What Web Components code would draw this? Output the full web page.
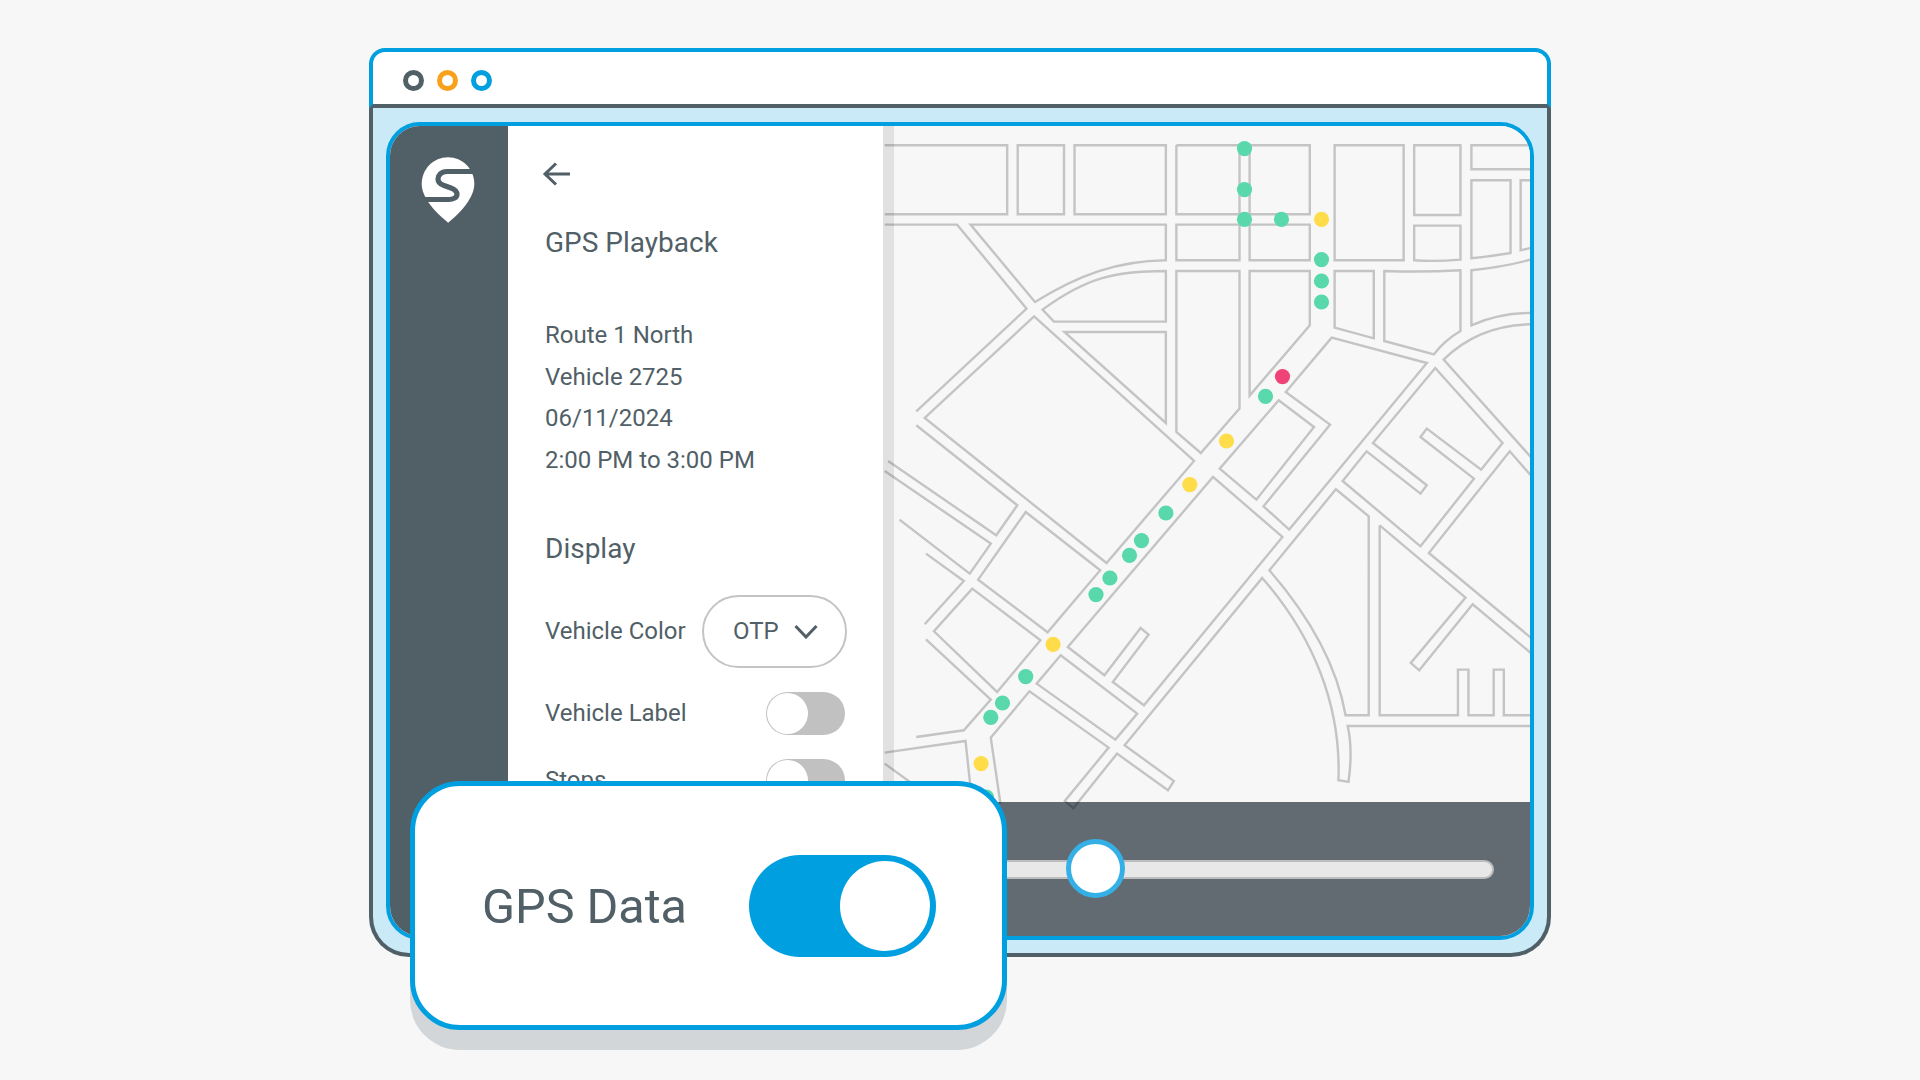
<!DOCTYPE html>
<html lang="en">
<head>
<meta charset="utf-8">
<title>GPS Playback</title>
<style>
  html, body { margin: 0; background: #f7f7f7; }
  body { height: 1080px; overflow: hidden; font-family: Roboto, "Liberation Sans", sans-serif; color: #515f67; }
  .stage { padding: 48px 0 0 369px; }
</style>
</head>
<body>
<div class="stage">
  <app-window>
    <side-rail></side-rail>
    <playback-panel></playback-panel>
    <map-view></map-view>
    <gps-card slot="overlay"></gps-card>
  </app-window>
</div>

<script>
class AppWindow extends HTMLElement {
  constructor() {
    super();
    this.attachShadow({mode: 'open'});
    this.shadowRoot.innerHTML = `
    <style>
      :host { display: block; position: relative; width: 1182px; height: 909px; }
      .frame { display: flex; flex-direction: column; height: 100%; }
      .bar {
        display: flex; align-items: center; gap: 13px; height: 60px; box-sizing: border-box;
        padding: 4px 0 0 30px; background: #fff;
        border: 4px solid #009fe0; border-bottom-color: #515f67; border-radius: 16px 16px 0 0;
      }
      .dot { width: 21px; height: 21px; box-sizing: border-box; border: 5px solid; border-radius: 50%; }
      .body {
        flex: 1; display: flex; min-height: 0; padding: 14px 13px 13px;
        background: #cbeaf8; border: 4px solid #515f67; border-top: 0; border-radius: 0 0 40px 40px;
      }
      .screen {
        flex: 1; display: flex; overflow: hidden; background: #fff;
        border: 4px solid #009fe0; border-radius: 34px;
      }
    </style>
    <div class="frame">
      <div class="bar">
        <span class="dot" style="border-color:#515f67"></span>
        <span class="dot" style="border-color:#f9a11b"></span>
        <span class="dot" style="border-color:#009fe0"></span>
      </div>
      <div class="body"><div class="screen"><slot></slot></div></div>
    </div>
    <slot name="overlay"></slot>
    `;
  }
}

class SideRail extends HTMLElement {
  constructor() {
    super();
    this.attachShadow({mode: 'open'});
    this.shadowRoot.innerHTML = `
    <style>
      :host { display: flex; justify-content: center; flex: 0 0 118px; padding: 30px 2px 0 0; background: #515f67; box-sizing: border-box; }
      svg { display: block; }
    </style>
    <svg width="55" height="67" viewBox="421 156 55 67">
      <path fill="#fff" d="M448 157.3C462.5 157.3 474.3 169 474.3 184C474.3 198 460 213 448.2 222.7C436 213 421.7 198 421.7 184C421.7 169 433.5 157.3 448 157.3Z"/>
      <path fill="none" stroke="#515f67" stroke-width="5.2" d="M477 171.5H447C441 171.5 438 175.5 438 179C438 183 441 184.5 444 185.5L451 188C455 189.5 457 192 457 194.5C457 197.5 453 199.5 449 199.5H418"/>
    </svg>
    `;
  }
}

class PlaybackPanel extends HTMLElement {
  constructor() {
    super();
    this.attachShadow({mode: 'open'});
    this.shadowRoot.innerHTML = `
    <style>
      :host { display: block; flex: 0 0 374.5px; box-sizing: border-box; padding: 36px 36px 0 37px; color: #515f67; font-family: Roboto, sans-serif; font-size: 24px; }
      svg { display: block; }
      h2 { margin: 0; font-size: 28px; line-height: 34px; font-weight: 400; }
      .back { height: 24px; margin-left: -3px; }
      .title { margin-top: 40px; }
      .info { margin-top: 55px; line-height: 41.6px; }
      .display { margin-top: 50.6px; }
      .row { display: flex; align-items: center; justify-content: space-between; margin-top: 24px; padding-right: 2px; }
      .first { margin-top: 29px; padding-right: 0; }
      .select {
        display: flex; align-items: center; gap: 15px; width: 144.5px; height: 73px; box-sizing: border-box;
        padding-left: 29px; border: 2.5px solid #c4c4c4; border-radius: 37px;
      }
    </style>
    <div class="back">
      <svg width="28" height="24" viewBox="0 0 28 24" fill="none" stroke="#515f67" stroke-width="3">
        <path d="M28 12H3M14 1.5L3 12L14 22.5"/>
      </svg>
    </div>
    <h2 class="title">GPS Playback</h2>
    <div class="info">
      <div>Route 1 North</div>
      <div>Vehicle 2725</div>
      <div>06/11/2024</div>
      <div>2:00 PM to 3:00 PM</div>
    </div>
    <h2 class="display">Display</h2>
    <div class="row first">
      <span>Vehicle Color</span>
      <div class="select">
        <span>OTP</span>
        <svg width="24" height="15" viewBox="0 0 24 15" fill="none" stroke="#515f67" stroke-width="3"><path d="M1.5 2L12 13L22.5 2"/></svg>
      </div>
    </div>
    <div class="row"><span>Vehicle Label</span><toggle-switch></toggle-switch></div>
    <div class="row"><span>Stops</span><toggle-switch></toggle-switch></div>
    `;
  }
}

class ToggleSwitch extends HTMLElement {
  constructor() {
    super();
    this.attachShadow({mode: 'open'});
    this.shadowRoot.innerHTML = `
    <style>
      :host { display: flex; box-sizing: border-box; width: 79px; height: 43px; background: #c1c1c1; border-radius: 22px; }
      .knob { width: 41px; height: 41px; margin: 1px; box-sizing: border-box; background: #fff; border-radius: 50%; }
      :host([on]) { width: 187px; height: 102px; background: #009fe0; border-radius: 51px; justify-content: flex-end; }
      :host([on]) .knob { width: 90px; height: 90px; margin: 6px; }
    </style>
    <div class="knob"></div>
    `;
  }
}

class MapView extends HTMLElement {
  constructor() {
    super();
    this.attachShadow({mode: 'open'});

    const dots = [
      [1244, 148.3, 'g'], [1244, 189.3, 'g'], [1244, 219, 'g'], [1281, 219, 'g'], [1321, 219, 'y'],
      [1321, 259.3, 'g'], [1321, 280.7, 'g'], [1321, 301.7, 'g'], [1282, 376.3, 'p'], [1265, 396, 'g'],
      [1226, 440.7, 'y'], [1189.3, 484.3, 'y'], [1165.4, 512.7, 'g'], [1141, 540.3, 'g'], [1129, 555, 'g'],
      [1109.4, 577.7, 'g'], [1095.5, 594.3, 'g'], [1052.6, 644, 'y'], [1025.2, 676.3, 'g'], [1002, 702.7, 'g'],
      [990.3, 717, 'g'], [980.6, 763.3, 'y'], [986, 796.7, 'g']
    ];
    const colors = {g: '#58d8ab', y: '#ffdc4a', p: '#ef4377'};
    const circles = dots.map(d => `<circle cx="${d[0]}" cy="${d[1]}" r="7.6" fill="${colors[d[2]]}"/>`).join('');

    // streets traced from two crops, so each group has its own offset
    const upper = [
      'M10 75H301V282H10', 'M326 75H436V282H326Z', 'M461 75H678V282H461Z',
      'M703 75H1020V282H877V75M853 75V282H703V75', 'M1079 75H1243V420H1079Z', 'M1268 75H1378V284H1268Z',
      'M1545 75H1404V147H1545', 'M10 313H182L347 565L85 873', 'M214 313H678V420C560 422 470 465 367 545Z',
      'M703 313H853V420H703Z', 'M877 313H1020V420H877Z', 'M1268 316H1378V418Q1320 424 1268 420Z',
      'M1404 180H1497V398Q1450 408 1404 414Z', 'M1545 180H1521V390L1545 383',
      'M678 452C560 452 490 470 385 568L412 604H678Z', 'M703 452H853V865L761 998L703 935Z',
      'M877 452H1020V615L877 826Z', 'M1079 452H1172V654L1079 622Z',
      'M1197 452Q1290 456 1378 450V632Q1340 660 1315 702L1197 662Z',
      'M1545 418Q1480 440 1404 450V615Q1470 578 1545 578', 'M437 635H678V908Z',
      'M1545 612Q1420 615 1338 718L1545 1010'
    ];
    const lower = [
      'M365 -372L745 62L537 368L105 -67Z', 'M18 62L275 285L325 195L85 -45', 'M10 92L262 310L212 400L45 238',
      'M108 340L198 422L105 552', 'M345 215L522 390L397 576L232 418Z', 'M218 445L380 600L277 755L127 573Z',
      'M108 597L262 778L198 870L85 890', 'M10 937L202 902L218 1090', 'M10 970L70 1025',
      'M285 1090L262 892L354 753L542 922L438 1082L458 1104L562 940L683 1050L697 1022L580 915L907 413C1030 590 1095 800 1088 1020L1112 1025C1120 950 1118 900 1110 857H1545',
      'M924 390C1020 530 1085 680 1105 825H1160V228L1082 147Z',
      'M1186 255V825H1372V688H1397V825H1457V688H1481V825H1545', 'M1186 255L1390 472L1260 668L1280 690L1407 492L1545 638',
      'M1545 592L1303 338L1495 33L1545 105', 'M790 110L955 290L626 795L552 725L637 583L618 563L532 705L445 620Z',
      'M428 645L610 820L558 898L371 730Z', 'M946 -120L1030 -40L893 178L806 85Z',
      'M1072 -308L963 -145L1068 -47L910 198L971 268L1298 -232Z',
      'M1318 -217L1478 8L1427 88L1298 -35L1283 -10L1410 115L1283 318L1098 122L1155 33L1283 160L1298 135L1170 8Z'
    ];
    const paths = list => list.map(d => `<path d="${d}"/>`).join('');

    this.shadowRoot.innerHTML = `
    <style>
      :host { display: block; position: relative; flex: 1; background: #f7f7f7; overflow: hidden; isolation: isolate; }
      svg { display: block; position: absolute; left: 0; top: 0; }
      path { fill: none; stroke: #c4c4c4; stroke-width: 2.4; vector-effect: non-scaling-stroke; }
      .edge { position: absolute; left: 0; top: 0; bottom: 0; width: 11.5px; background: rgba(0, 0, 0, 0.085); }
      .shade { position: absolute; left: 0; right: 0; bottom: 0; height: 134px; background: #646e75; mix-blend-mode: multiply; }
      .bar {
        position: absolute; left: 0; right: 0; bottom: 0; height: 134px; box-sizing: border-box;
        display: flex; align-items: center; padding: 0 36.4px 0 100px;
      }
      .track { position: relative; flex: 1; height: 19px; box-sizing: border-box; background: #e8e8e8; border: 2.5px solid #bdbdbd; border-radius: 10px; }
      .thumb { position: absolute; left: 81px; top: -22.5px; width: 59px; height: 59px; box-sizing: border-box; background: #fff; border: 5px solid #35b0e6; border-radius: 50%; }
    </style>
    <svg width="648" height="811" viewBox="882.5 125.7 648 811">
      <g transform="translate(880 120) scale(.42088 .33333)">${paths(upper)}</g>
      <g transform="translate(880 440) scale(.42088 .33333)">${paths(lower)}</g>
      ${circles}
    </svg>
    <div class="edge"></div>
    <div class="shade"></div>
    <div class="bar"><div class="track"><div class="thumb"></div></div></div>
    `;
  }
}

class GpsCard extends HTMLElement {
  constructor() {
    super();
    this.attachShadow({mode: 'open'});
    this.shadowRoot.innerHTML = `
    <style>
      :host {
        display: flex; align-items: center; justify-content: space-between; position: absolute;
        left: 41px; top: 733px; width: 597px; height: 249px; box-sizing: border-box;
        padding: 0 66.5px 0 67px; background: #fff; border: 5px solid #009fe0; border-radius: 50px;
        box-shadow: 0 20px 0 #d2d6d8; color: #515f67; font-family: Roboto, sans-serif;
      }
      span { font-size: 48.5px; padding-top: 2px; }
    </style>
    <span>GPS Data</span>
    <toggle-switch on></toggle-switch>
    `;
  }
}

customElements.define('toggle-switch', ToggleSwitch);
customElements.define('side-rail', SideRail);
customElements.define('playback-panel', PlaybackPanel);
customElements.define('map-view', MapView);
customElements.define('gps-card', GpsCard);
customElements.define('app-window', AppWindow);
</script>
</body>
</html>
